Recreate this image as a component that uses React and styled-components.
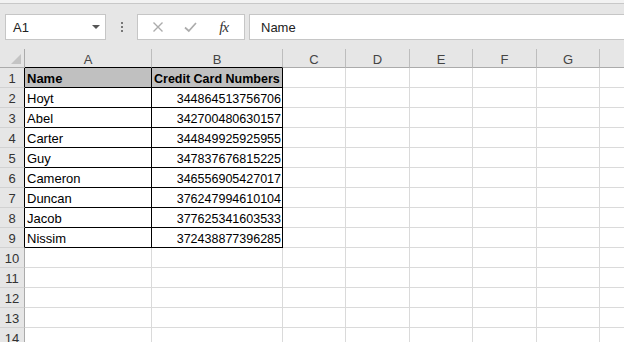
import React from "react";
import styled, { createGlobalStyle } from "styled-components";

const GlobalStyle = createGlobalStyle`
  html, body { margin: 0; padding: 0; background: #fff; }
  body { width: 624px; height: 342px; overflow: hidden; font-family: "Liberation Sans", Arial, sans-serif; }
`;

const Window = styled.div`
  width: 624px;
  height: 342px;
  overflow: hidden;
  display: flex;
  flex-direction: column;
`;

const TitleStrip = styled.div`
  height: 3px;
  background: #f2f2f2;
  border-bottom: 1px solid #c8c8c8;
  flex: none;
`;

const Ribbon = styled.div`
  height: 45px;
  flex: none;
  background: #e6e6e6;
  box-sizing: border-box;
  padding: 10px 0 0 5px;
  display: flex;
  align-items: flex-start;
  overflow: hidden;
`;

const NameBox = styled.div`
  width: 101px;
  height: 26px;
  box-sizing: border-box;
  background: #fff;
  border: 1px solid #c6c6c6;
  display: flex;
  align-items: center;
  justify-content: space-between;
  padding: 0 5px 0 7px;
  font-size: 13px;
  color: #222;
`;

const Caret = styled.span`
  width: 0;
  height: 0;
  border-left: 4px solid transparent;
  border-right: 4px solid transparent;
  border-top: 4px solid #555;
`;

const Grip = styled.div`
  width: 31px;
  height: 26px;
  display: flex;
  flex-direction: column;
  align-items: center;
  justify-content: center;
  gap: 2px;
`;

const Dot = styled.span`
  width: 2px;
  height: 2px;
  background: #777;
`;

const FxBox = styled.div`
  width: 108px;
  height: 26px;
  box-sizing: border-box;
  background: #fff;
  border: 1px solid #c6c6c6;
  display: flex;
  align-items: center;
  justify-content: space-around;
  padding: 0 4px;
`;

const IconSlot = styled.span`
  width: 24px;
  display: flex;
  justify-content: center;
  align-items: center;
`;

const FxText = styled.span`
  font-family: "Liberation Serif", "Times New Roman", serif;
  font-style: italic;
  font-size: 15px;
  color: #333;
  letter-spacing: -1px;
`;

const FormulaBar = styled.div`
  flex: 1;
  margin-left: 4px;
  margin-right: -2px;
  height: 26px;
  box-sizing: border-box;
  background: #fff;
  border: 1px solid #c6c6c6;
  display: flex;
  align-items: center;
  padding-left: 11px;
  font-size: 13px;
  color: #222;
`;

const Sheet = styled.div`
  display: grid;
  grid-template-columns: 25px 127px 131px 63px 64px 63px 64px 63px 64px;
  grid-template-rows: 19px;
  grid-auto-rows: 20px;
  flex: none;
`;

const Corner = styled.div`
  position: relative;
  background: #e6e6e6;
  border-right: 1px solid #ababab;
  border-bottom: 1px solid #ababab;
`;

const CornerTriangle = styled.span`
  position: absolute;
  right: 3px;
  bottom: 3px;
  width: 0;
  height: 0;
  border-left: 10px solid transparent;
  border-bottom: 10px solid #c4c4c4;
`;

const ColHead = styled.div`
  box-sizing: border-box;
  background: #e6e6e6;
  border-right: 1px solid #bdbdbd;
  border-bottom: 1px solid ${(p) => (p.$boxed ? "#000" : "#ababab")};
  display: flex;
  align-items: center;
  justify-content: center;
  font-size: 13px;
  color: #444;
  padding-top: 2px;
`;

const RowHead = styled.div`
  box-sizing: border-box;
  background: #e6e6e6;
  border-right: 1px solid ${(p) => (p.$boxed ? "#000" : "#ababab")};
  border-bottom: 1px solid #d2d2d2;
  display: flex;
  align-items: flex-end;
  justify-content: center;
  font-size: 13px;
  line-height: 16px;
  color: #333;
`;

const Cell = styled.div`
  box-sizing: border-box;
  background: ${(p) => (p.$head ? "#c0c0c0" : "#fff")};
  border-right: 1px solid ${(p) => (p.$boxed ? "#000" : "#dadada")};
  border-bottom: 1px solid ${(p) => (p.$boxed ? "#000" : "#dadada")};
  display: flex;
  align-items: flex-end;
  justify-content: ${(p) => (p.$right ? "flex-end" : "flex-start")};
  padding: 0 ${(p) => (p.$right ? "1px" : "0")} 0 ${(p) => (p.$right ? "0" : "2px")};
  font-size: ${(p) => (p.$narrow ? "12.5px" : "13px")};
  line-height: 16px;
  font-weight: ${(p) => (p.$head ? 700 : 400)};
  color: #000;
  white-space: nowrap;
  overflow: hidden;
`;

const columns = ["A", "B", "C", "D", "E", "F", "G", ""];

const data = [
  ["Name", "Credit Card Numbers"],
  ["Hoyt", "344864513756706"],
  ["Abel", "342700480630157"],
  ["Carter", "344849925925955"],
  ["Guy", "347837676815225"],
  ["Cameron", "346556905427017"],
  ["Duncan", "376247994610104"],
  ["Jacob", "377625341603533"],
  ["Nissim", "372438877396285"],
];

const CrossIcon = () => (
  <svg width="12" height="12" viewBox="0 0 12 12">
    <path d="M1.5 1.5 L10.5 10.5 M10.5 1.5 L1.5 10.5" stroke="#acacac" strokeWidth="1.4" fill="none" />
  </svg>
);

const CheckIcon = () => (
  <svg width="13" height="12" viewBox="0 0 13 12">
    <path d="M1 6.5 L4.8 10 L12 2" stroke="#acacac" strokeWidth="1.7" fill="none" />
  </svg>
);

export default function App() {
  const rows = [];
  for (let r = 1; r <= 14; r++) {
    const boxed = r <= 9;
    const rowData = data[r - 1];
    rows.push(
      <RowHead key={`rh${r}`} $boxed={boxed}>{r}</RowHead>
    );
    columns.forEach((c, i) => {
      const inTable = boxed && i < 2;
      const text = inTable ? rowData[i] : "";
      rows.push(
        <Cell
          key={`c${r}-${i}`}
          $boxed={inTable}
          $head={inTable && r === 1}
          $right={inTable && i === 1 && r > 1}
          $narrow={inTable && i === 1}
        >
          {text}
        </Cell>
      );
    });
  }

  return (
    <Window>
      <GlobalStyle />
      <TitleStrip />
      <Ribbon>
        <NameBox>
          <span>A1</span>
          <Caret />
        </NameBox>
        <Grip>
          <Dot />
          <Dot />
          <Dot />
        </Grip>
        <FxBox>
          <IconSlot><CrossIcon /></IconSlot>
          <IconSlot><CheckIcon /></IconSlot>
          <IconSlot><FxText>fx</FxText></IconSlot>
        </FxBox>
        <FormulaBar>Name</FormulaBar>
      </Ribbon>
      <Sheet>
        <Corner>
          <CornerTriangle />
        </Corner>
        {columns.map((c, i) => (
          <ColHead key={`h${i}`} $boxed={i < 2}>{c}</ColHead>
        ))}
        {rows}
      </Sheet>
    </Window>
  );
}
